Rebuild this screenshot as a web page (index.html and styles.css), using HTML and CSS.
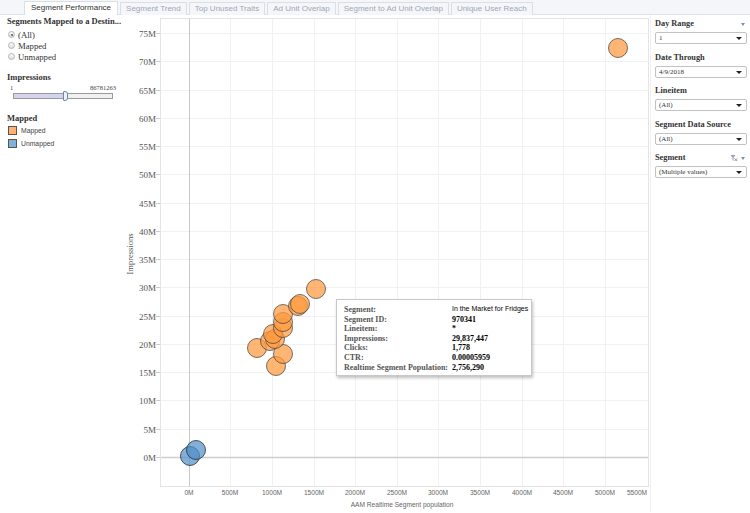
FILE: index.html
```html
<!DOCTYPE html>
<html>
<head>
<meta charset="utf-8">
<link rel="stylesheet" href="styles.css">
</head>
<body>
<div class="tabbar">
  <div class="tab active">Segment Performance</div>
  <div class="tab">Segment Trend</div>
  <div class="tab">Top Unused Traits</div>
  <div class="tab">Ad Unit Overlap</div>
  <div class="tab">Segment to Ad Unit Overlap</div>
  <div class="tab">Unique User Reach</div>
</div>
<div class="main">
  <aside class="left">
    <div class="head">Segments Mapped to a Destin...</div>
    <div class="radios">
      <div class="radio"><span class="dot on"></span>(All)</div>
      <div class="radio"><span class="dot"></span>Mapped</div>
      <div class="radio"><span class="dot"></span>Unmapped</div>
    </div>
    <div class="head imp">Impressions</div>
    <div class="range"><span>1</span><span>86781263</span></div>
    <div class="slider"><div class="fill"></div><div class="handle"></div></div>
    <div class="head mapped">Mapped</div>
    <div class="legend">
      <div class="item"><span class="sw orange"></span>Mapped</div>
      <div class="item"><span class="sw blue"></span>Unmapped</div>
    </div>
  </aside>
  <div class="chart">
    <svg class="plot" width="530" height="497" viewBox="120 16 530 497" xmlns="http://www.w3.org/2000/svg">
      <rect x="160.5" y="19.5" width="488" height="468" fill="#fff" stroke="#e4e4e4"/>
      <g stroke="#f1f1f1" stroke-width="1">
        <line x1="161" x2="648" y1="34.5" y2="34.5"/>
        <line x1="161" x2="648" y1="62.5" y2="62.5"/>
        <line x1="161" x2="648" y1="91.5" y2="91.5"/>
        <line x1="161" x2="648" y1="119.5" y2="119.5"/>
        <line x1="161" x2="648" y1="147.5" y2="147.5"/>
        <line x1="161" x2="648" y1="175.5" y2="175.5"/>
        <line x1="161" x2="648" y1="204.5" y2="204.5"/>
        <line x1="161" x2="648" y1="232.5" y2="232.5"/>
        <line x1="161" x2="648" y1="260.5" y2="260.5"/>
        <line x1="161" x2="648" y1="288.5" y2="288.5"/>
        <line x1="161" x2="648" y1="317.5" y2="317.5"/>
        <line x1="161" x2="648" y1="345.5" y2="345.5"/>
        <line x1="161" x2="648" y1="373.5" y2="373.5"/>
        <line x1="161" x2="648" y1="401.5" y2="401.5"/>
        <line x1="161" x2="648" y1="430.5" y2="430.5"/>
        <line y1="20" y2="487" x1="230.5" x2="230.5"/>
        <line y1="20" y2="487" x1="272.5" x2="272.5"/>
        <line y1="20" y2="487" x1="314.5" x2="314.5"/>
        <line y1="20" y2="487" x1="355.5" x2="355.5"/>
        <line y1="20" y2="487" x1="397.5" x2="397.5"/>
        <line y1="20" y2="487" x1="438.5" x2="438.5"/>
        <line y1="20" y2="487" x1="480.5" x2="480.5"/>
        <line y1="20" y2="487" x1="522.5" x2="522.5"/>
        <line y1="20" y2="487" x1="563.5" x2="563.5"/>
        <line y1="20" y2="487" x1="605.5" x2="605.5"/>
      </g>
      <line x1="161" x2="648" y1="458.5" y2="458.5" stroke="#cfcfcf" stroke-width="1.5"/>
      <line x1="189.5" x2="189.5" y1="20" y2="487" stroke="#c8c8c8" stroke-width="1"/>
      <g stroke="#cccccc">
        <line x1="156" x2="160" y1="34.5" y2="34.5"/>
        <line x1="156" x2="160" y1="62.5" y2="62.5"/>
        <line x1="156" x2="160" y1="91.5" y2="91.5"/>
        <line x1="156" x2="160" y1="119.5" y2="119.5"/>
        <line x1="156" x2="160" y1="147.5" y2="147.5"/>
        <line x1="156" x2="160" y1="175.5" y2="175.5"/>
        <line x1="156" x2="160" y1="204.5" y2="204.5"/>
        <line x1="156" x2="160" y1="232.5" y2="232.5"/>
        <line x1="156" x2="160" y1="260.5" y2="260.5"/>
        <line x1="156" x2="160" y1="288.5" y2="288.5"/>
        <line x1="156" x2="160" y1="317.5" y2="317.5"/>
        <line x1="156" x2="160" y1="345.5" y2="345.5"/>
        <line x1="156" x2="160" y1="373.5" y2="373.5"/>
        <line x1="156" x2="160" y1="401.5" y2="401.5"/>
        <line x1="156" x2="160" y1="430.5" y2="430.5"/>
        <line x1="156" x2="160" y1="458.5" y2="458.5"/>
      </g>
      <g class="ylab" text-anchor="end">
        <text x="156" y="37.5">75M</text>
        <text x="156" y="65.5">70M</text>
        <text x="156" y="94.5">65M</text>
        <text x="156" y="122.5">60M</text>
        <text x="156" y="150.5">55M</text>
        <text x="156" y="178.5">50M</text>
        <text x="156" y="207.5">45M</text>
        <text x="156" y="235.5">40M</text>
        <text x="156" y="263.5">35M</text>
        <text x="156" y="291.5">30M</text>
        <text x="156" y="320.5">25M</text>
        <text x="156" y="348.5">20M</text>
        <text x="156" y="376.5">15M</text>
        <text x="156" y="404.5">10M</text>
        <text x="156" y="433.5">5M</text>
        <text x="156" y="461.5">0M</text>
      </g>
      <text class="ytitle" transform="translate(133 255) rotate(-90)" text-anchor="middle">Impressions</text>
      <g class="xlab" text-anchor="middle">
        <text x="189" y="496">0M</text>
        <text x="230" y="496">500M</text>
        <text x="272" y="496">1000M</text>
        <text x="314" y="496">1500M</text>
        <text x="355" y="496">2000M</text>
        <text x="397" y="496">2500M</text>
        <text x="438" y="496">3000M</text>
        <text x="480" y="496">3500M</text>
        <text x="522" y="496">4000M</text>
        <text x="563" y="496">4500M</text>
        <text x="605" y="496">5000M</text>
        <text x="637" y="496">5500M</text>
      </g>
      <text class="xtitle" x="402" y="508" text-anchor="middle">AAM Realtime Segment population</text>
      <g fill="#ff9a40" fill-opacity="0.72" stroke="#3d3d3d" stroke-opacity="0.7" stroke-width="1">
        <circle cx="618" cy="49" r="9.5"/>
        <circle cx="276" cy="367" r="9.5"/>
        <circle cx="257" cy="349" r="9.5"/>
        <circle cx="283" cy="355" r="9.5"/>
        <circle cx="270" cy="342" r="9.5"/>
        <circle cx="275" cy="340" r="9.5"/>
        <circle cx="273" cy="335" r="9.5"/>
        <circle cx="283" cy="329" r="9.5"/>
        <circle cx="283" cy="323" r="9.5"/>
        <circle cx="283" cy="315" r="9.5"/>
        <circle cx="298" cy="307" r="9.5"/>
        <circle cx="300" cy="305" r="9.5"/>
        <circle cx="316" cy="290" r="9.5"/>
      </g>
      <g fill="#4e8fc8" fill-opacity="0.7" stroke="#2e2e2e" stroke-opacity="0.8" stroke-width="1">
        <circle cx="190" cy="457" r="9.5"/>
        <circle cx="196" cy="451" r="9.5"/>
      </g>
    </svg>
    <div class="tooltip">
      <div class="k">Segment:</div><div class="v sans">In the Market for Fridges</div>
      <div class="k">Segment ID:</div><div class="v">970341</div>
      <div class="k">Lineitem:</div><div class="v">*</div>
      <div class="k">Impressions:</div><div class="v">29,837,447</div>
      <div class="k">Clicks:</div><div class="v">1,778</div>
      <div class="k">CTR:</div><div class="v">0.00005959</div>
      <div class="k">Realtime Segment Population:</div><div class="v">2,756,290</div>
    </div>
  </div>
  <aside class="right">
    <div class="field">
      <div class="flabel"><span>Day Range</span><span class="tri"></span></div>
      <div class="select">1<span class="arrow"></span></div>
    </div>
    <div class="field">
      <div class="flabel"><span>Date Through</span></div>
      <div class="select">4/9/2018<span class="arrow"></span></div>
    </div>
    <div class="field">
      <div class="flabel"><span>Lineitem</span></div>
      <div class="select">(All)<span class="arrow"></span></div>
    </div>
    <div class="field">
      <div class="flabel"><span>Segment Data Source</span></div>
      <div class="select">(All)<span class="arrow"></span></div>
    </div>
    <div class="field">
      <div class="flabel"><span>Segment</span><span class="icons"><svg width="8" height="8" viewBox="0 0 8 8"><path d="M0.5 1 L5.5 1 L3.5 3.8 L3.5 7 L2.5 6.3 L2.5 3.8 Z" fill="#8fa9c6"/><path d="M4.6 4.4 L7.2 7 M7.2 4.4 L4.6 7" stroke="#e07a5a" stroke-width="1"/></svg><span class="tri"></span></span></div>
      <div class="select">(Multiple values)<span class="arrow"></span></div>
    </div>
  </aside>
</div>
</body>
</html>
```
FILE: styles.css
```css
* { box-sizing: border-box; }
html, body { margin: 0; padding: 0; background: #fff; }
body { width: 750px; height: 513px; overflow: hidden; font-family: "Liberation Serif", serif; color: #333; }

.tabbar {
  height: 15px;
  background: #f4f6f9;
  border-bottom: 1px solid #dde3ea;
  display: flex;
  align-items: flex-end;
  gap: 2px;
  padding-left: 24px;
}
.tab {
  height: 13px;
  line-height: 12px;
  padding: 0 5px;
  font-family: "Liberation Sans", sans-serif;
  font-size: 8px;
  color: #9ea8b5;
  border: 1px solid #d9dfe6;
  border-bottom: none;
  background: #f4f6f9;
  margin-bottom: -1px;
}
.tab.active { background: #fff; color: #333; height: 14px; padding: 0 6px; }

.main { display: flex; height: 497px; }

.left { width: 120px; padding: 1px 0 0 7px; }
.head { font-weight: bold; font-size: 8.5px; line-height: 10px; color: #333; white-space: nowrap; }
.radios { margin-top: 3px; }
.radio { height: 11px; display: flex; align-items: center; font-size: 8.7px; color: #333; }
.dot {
  width: 7px; height: 7px; border-radius: 50%;
  border: 1px solid #b5b5b5;
  background: linear-gradient(#fafafa, #dedede);
  margin: 0 3px 0 1px;
  position: relative;
}
.dot.on::after {
  content: ""; position: absolute; left: 1.5px; top: 1.5px; width: 2px; height: 2px; border-radius: 50%; background: #555;
}
.head.imp { margin-top: 10px; }
.range {
  display: flex; justify-content: space-between;
  width: 109px; padding-left: 3px;
  font-size: 6.5px; line-height: 7px; margin-top: 2px; color: #444;
}
.slider {
  position: relative;
  width: 100px; height: 6px; margin: 2px 0 0 6px;
  border: 1px solid #9a9a9a;
  background: #f0f0f0;
}
.fill { width: 52px; height: 100%; background: #d3d3ef; }
.handle {
  position: absolute; left: 49px; top: -3px;
  width: 5px; height: 10px;
  background: #eef3fb; border: 1px solid #6d86a8; border-radius: 1px 3px 3px 1px;
}
.head.mapped { margin-top: 14px; }
.legend { margin-top: 1px; }
.item { height: 13px; display: flex; align-items: center; font-family: "Liberation Sans", sans-serif; font-size: 6.8px; color: #444; }
.sw { width: 9px; height: 9px; margin: 0 4px 0 1px; border: 1px solid #555; }
.sw.orange { background: #ffb272; }
.sw.blue { background: #83b0d8; }

.chart { position: relative; width: 530px; }
.plot { display: block; }
.ylab { font-family: "Liberation Serif", serif; font-size: 9px; fill: #555; }
.ytitle { font-family: "Liberation Serif", serif; font-size: 8.5px; fill: #555; }
.xlab { font-family: "Liberation Sans", sans-serif; font-size: 6.6px; fill: #666; }
.xtitle { font-family: "Liberation Sans", sans-serif; font-size: 6.6px; fill: #666; }

.tooltip {
  position: absolute;
  left: 216px; top: 284px;
  width: 196px; height: 77px;
  padding: 5px 0 0 7px;
  background: #fff;
  border: 1px solid #c8c8c8;
  box-shadow: 1px 2px 3px rgba(0,0,0,0.25);
  display: grid;
  grid-template-columns: 108px auto;
  grid-auto-rows: 9.6px;
  font-size: 8px;
  font-weight: bold;
  color: #333;
  white-space: nowrap;
}
.tooltip .k { color: #555; }
.tooltip .v { color: #000; }
.tooltip .v.sans { font-family: "Liberation Sans", sans-serif; font-weight: normal; font-size: 7px; }

.right { width: 100px; padding: 4px 0 0 4px; border-left: 1px solid #f0f0f0; }
.field { margin-bottom: 8.5px; }
.flabel {
  display: flex; justify-content: space-between; align-items: center;
  font-weight: bold; font-size: 8.3px; line-height: 10px; height: 10px; color: #333;
  width: 92px; margin-bottom: 3px; white-space: nowrap;
}
.tri {
  display: inline-block; width: 0; height: 0;
  border-left: 2.5px solid transparent; border-right: 2.5px solid transparent;
  border-top: 3px solid #7390b4; margin-right: 2px;
}
.icons { display: flex; align-items: center; gap: 3px; }
.select {
  position: relative;
  width: 92px; height: 12px;
  border: 1px solid #c2c2c2; border-radius: 2px;
  font-size: 7px; line-height: 10px; padding-left: 3px; color: #333;
  background: #fff;
}
.arrow {
  position: absolute; right: 4px; top: 4px;
  width: 0; height: 0;
  border-left: 3px solid transparent; border-right: 3px solid transparent;
  border-top: 3px solid #222;
}
```
